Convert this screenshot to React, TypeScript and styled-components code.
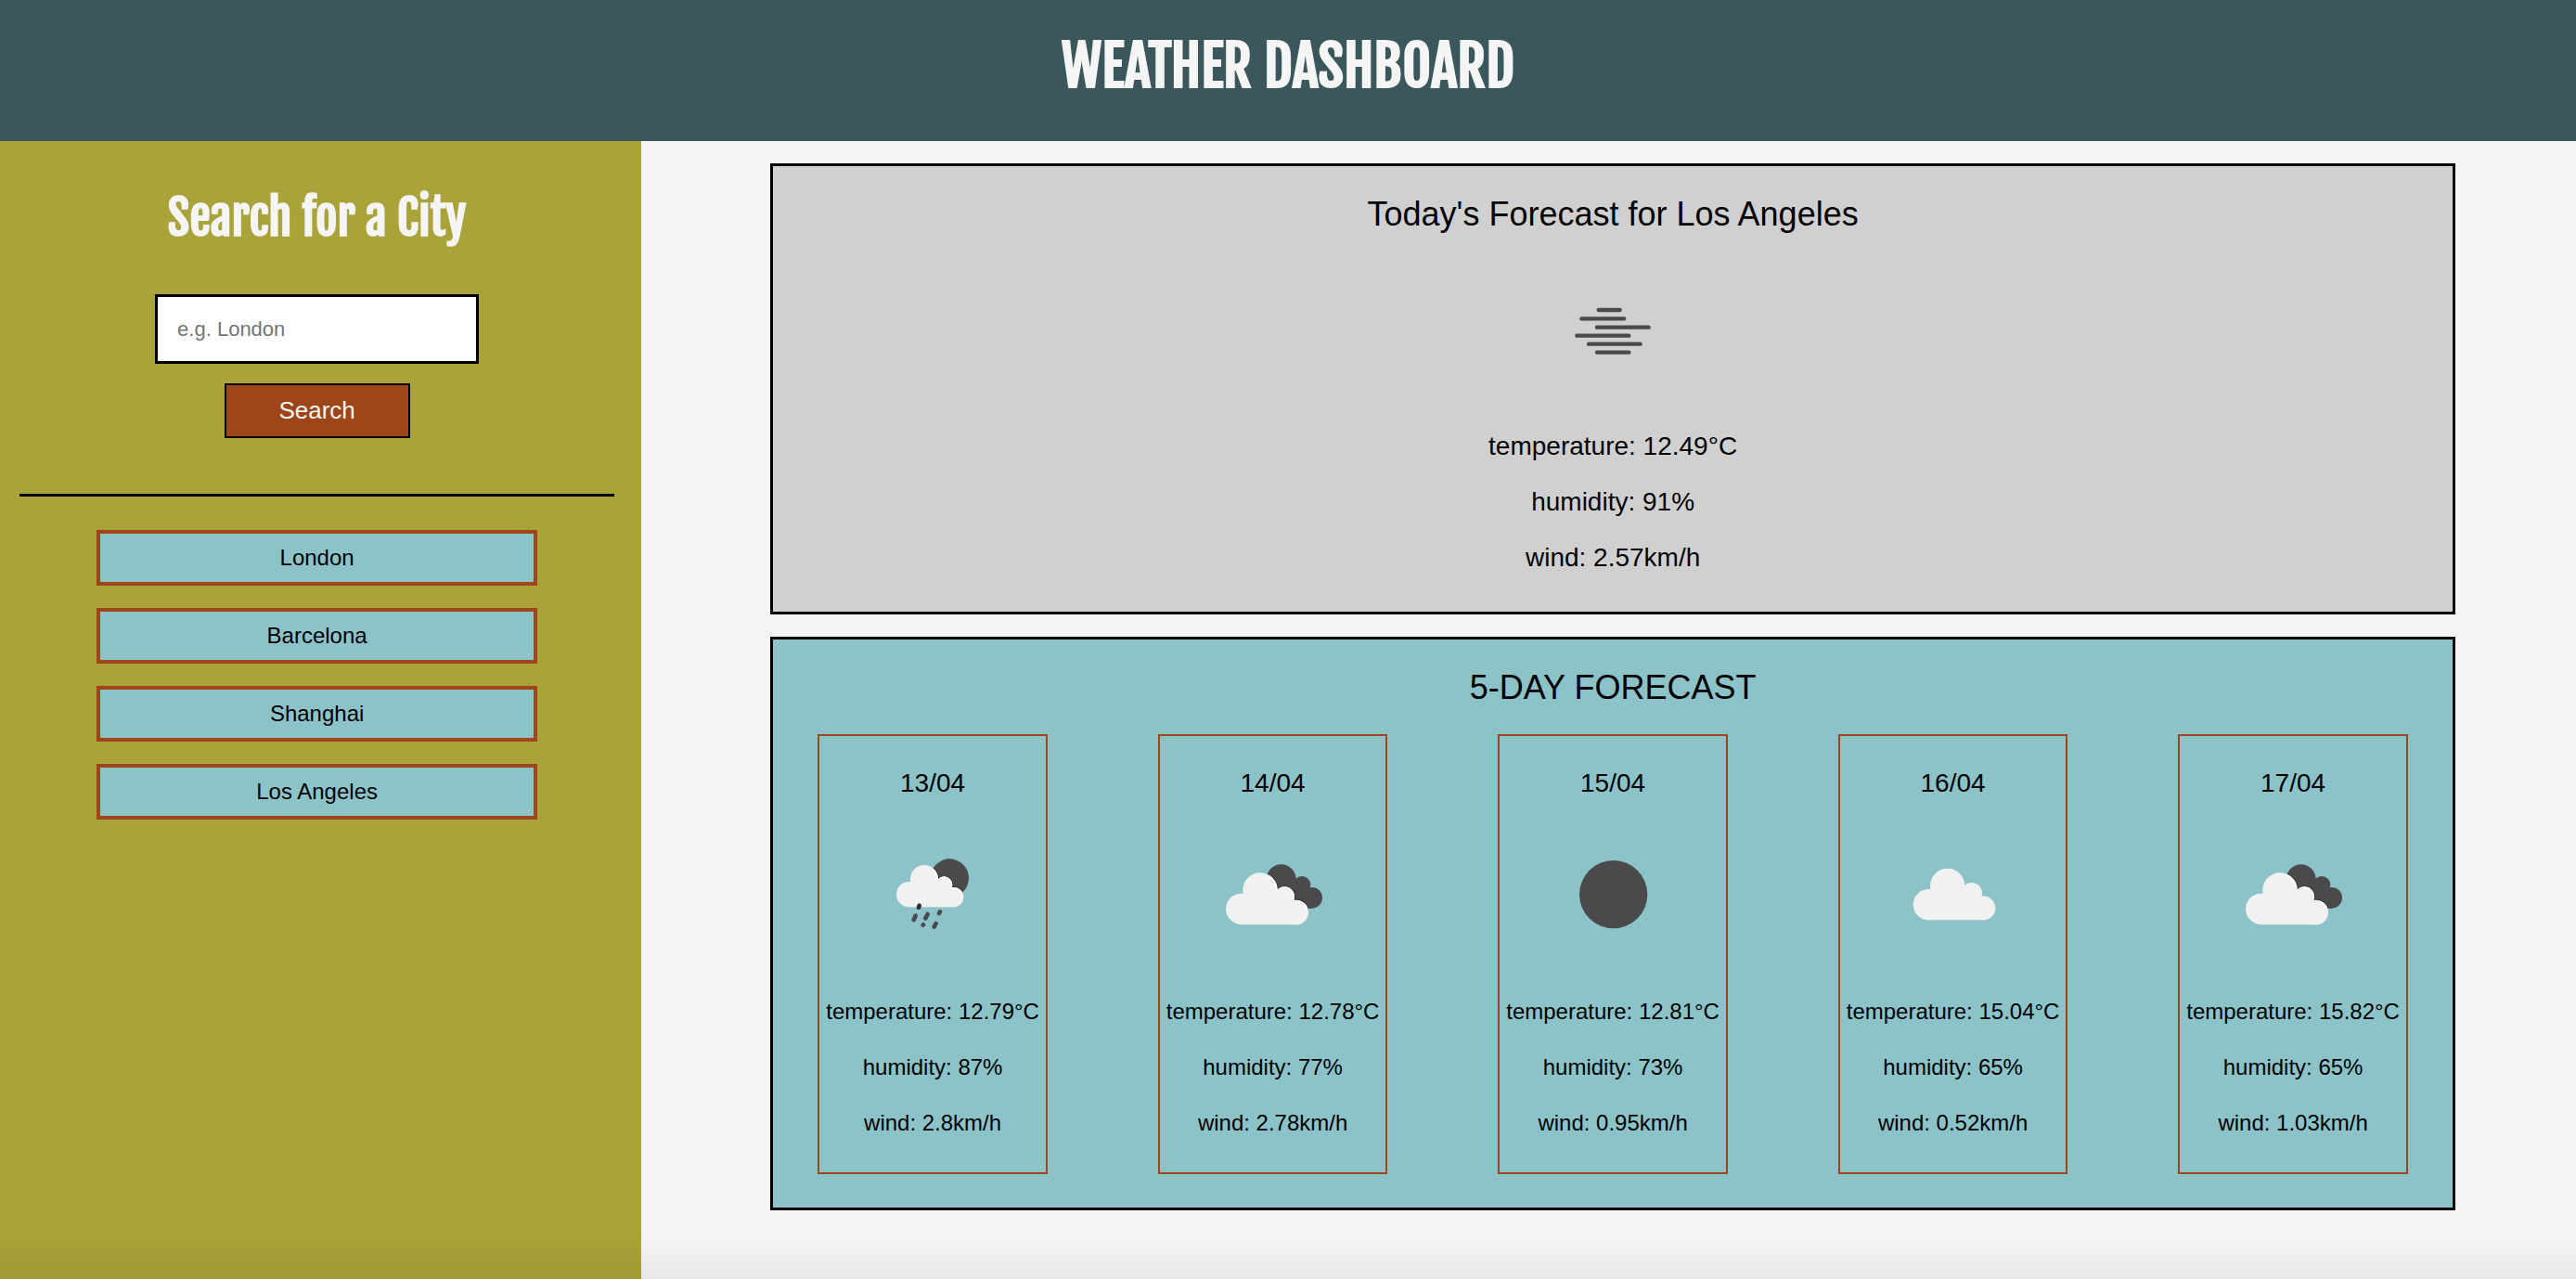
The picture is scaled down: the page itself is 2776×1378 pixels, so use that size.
import React, { useState } from 'react';
import styled, { createGlobalStyle } from 'styled-components';

const color = {
  header: '#3a575c',
  sidebar: '#aaa339',
  page: '#f5f5f5',
  today: '#d0d0d0',
  sky: '#8bc3c8',
  rust: '#9e461a',
  moon: '#4a4a4c',
  cloud: '#f1f1f1',
};

const displayFont = `'Fjalla One', 'Liberation Sans Narrow', 'Roboto Condensed', 'Open Sans Condensed', sans-serif`;

const GlobalStyle = createGlobalStyle`
  *, *::before, *::after { box-sizing: border-box; }
  body {
    margin: 0;
    background: ${color.page};
    color: #000;
    font-family: Arial, 'Liberation Sans', sans-serif;
  }
  h1, h2, h3, p, ul { margin: 0; padding: 0; }
`;

const Page = styled.div`
  display: flex;
  flex-direction: column;
  min-height: 100vh;
`;

const Header = styled.header`
  display: flex;
  justify-content: center;
  padding: 29px 24px 39px;
  background: ${color.header};
`;

const Title = styled.h1`
  color: ${color.page};
  font-family: ${displayFont};
  font-size: 60px;
  line-height: 84px;
  font-weight: 700;
`;

const Columns = styled.div`
  display: flex;
  flex: 1;
`;

const Sidebar = styled.aside`
  display: flex;
  flex-direction: column;
  align-items: center;
  flex: 0 0 24.9%;
  padding: 45px 29px 44px 21px;
  background: ${color.sidebar};
`;

const SidebarTitle = styled.h2`
  color: ${color.page};
  font-family: ${displayFont};
  font-size: 51px;
  line-height: 76px;
  font-weight: 700;
`;

const SearchForm = styled.form`
  display: flex;
  flex-direction: column;
  align-items: center;
  gap: 21px;
  margin-top: 44px;
`;

const SearchInput = styled.input`
  width: 349px;
  padding: 22px 21px;
  border: 3px solid #000;
  border-radius: 0;
  background: #fff;
  font: 22px/25px Arial, 'Liberation Sans', sans-serif;
  &::placeholder { color: #757575; opacity: 1; }
`;

const SearchButton = styled.button`
  width: 200px;
  padding: 12px;
  border: 2px solid #000;
  background: ${color.rust};
  color: ${color.page};
  font: 26px/31px Arial, 'Liberation Sans', sans-serif;
  cursor: pointer;
`;

const Divider = styled.hr`
  width: 100%;
  margin: 60px 0 36px;
  border: 0;
  border-top: 3px solid #000;
`;

const History = styled.ul`
  display: flex;
  flex-direction: column;
  align-items: center;
  gap: 24px;
  width: 100%;
  list-style: none;
`;

const HistoryItem = styled.li`
  width: 74%;
`;

const HistoryButton = styled.button`
  display: block;
  width: 100%;
  padding: 12px;
  border: 4px solid ${color.rust};
  background: ${color.sky};
  color: #000;
  font: 24px/28px Arial, 'Liberation Sans', sans-serif;
  cursor: pointer;
`;

const Main = styled.main`
  display: flex;
  flex-direction: column;
  flex: 1;
  gap: 24px;
  padding: 24px 130px 24px 139px;
`;

const Panel = styled.section<{ $fill: string; $bottom: number }>`
  display: flex;
  flex-direction: column;
  padding: 30px 48px ${(p) => p.$bottom}px;
  border: 3px solid #000;
  background: ${(p) => p.$fill};
  text-align: center;
`;

const PanelTitle = styled.h2`
  font-size: 36px;
  line-height: 44px;
  font-weight: 400;
`;

const IconSvg = styled.svg`
  display: block;
  width: 200px;
  height: 200px;
  margin: 4px auto 8px;
`;

const Readings = styled.div<{ $large?: boolean }>`
  display: flex;
  flex-direction: column;
  gap: ${(p) => (p.$large ? 28 : 32)}px;
  padding-top: ${(p) => (p.$large ? 0 : 4)}px;
  font-size: ${(p) => (p.$large ? 28 : 24)}px;
  line-height: ${(p) => (p.$large ? 32 : 28)}px;
`;

const Days = styled.div`
  display: flex;
  justify-content: space-between;
  margin-top: 28px;
`;

const DayCard = styled.article`
  padding: 35px 7px 39px;
  border: 2px solid ${color.rust};
`;

const DayTitle = styled.h3`
  font-size: 28px;
  line-height: 32px;
  font-weight: 400;
`;

const BottomShade = styled.div`
  position: fixed;
  inset: auto 0 0;
  height: 48px;
  background: linear-gradient(rgba(0, 0, 0, 0), rgba(0, 0, 0, 0.055));
  pointer-events: none;
`;

type IconKind = 'mist' | 'rain' | 'broken' | 'clear' | 'cloud';

const MistLines = () => (
  <path
    d="M128 72H197M73 100H211M123 128H290M58 155H226M96 182H263M123 209H226"
    stroke={color.moon}
    strokeWidth="13"
    strokeLinecap="round"
  />
);

const RainCloud = () => (
  <>
    <circle cx="198" cy="141" r="45" />
    <circle cx="149" cy="191" r="41" />
    <circle cx="262" cy="160" r="27" />
    <circle cx="293" cy="200" r="32" />
    <path d="M149 160L262 150L293 190V232H149Z" />
  </>
);

const FrontCloud = () => (
  <>
    <circle cx="174" cy="177" r="56" />
    <circle cx="113" cy="238" r="50" />
    <circle cx="253" cy="198" r="32" />
    <circle cx="290" cy="249" r="40" />
    <path d="M113 200L250 190L290 230V289H113Z" />
  </>
);

const SmallCloud = () => (
  <>
    <circle cx="205" cy="163" r="56" />
    <circle cx="144" cy="224" r="50" />
    <circle cx="283" cy="187" r="34" />
    <circle cx="321" cy="235" r="39" />
    <path d="M144 185L280 180L321 215V274H144Z" />
  </>
);

const BackCloud = () => (
  <>
    <circle cx="242" cy="142" r="48" />
    <circle cx="309" cy="160" r="28" />
    <circle cx="341" cy="202" r="34" />
    <path d="M200 150L300 140L335 180L341 236H300Z" />
  </>
);

const views: Record<IconKind, string> = {
  mist: '-126 -159 600 600',
  rain: '-75 -108 600 600',
  broken: '-84 -108 600 600',
  clear: '-65 -108 600 600',
  cloud: '-76 -108 600 600',
};

function WeatherIcon({ kind, label, id }: { kind: IconKind; label: string; id: string }) {
  return (
    <IconSvg viewBox={views[kind]} role="img" aria-label={label} fill="none">
      {kind === 'mist' && <MistLines />}
      {kind === 'clear' && <circle cx="237" cy="191" r="110" fill={color.moon} />}
      {kind === 'cloud' && (
        <g fill={color.cloud}>
          <SmallCloud />
        </g>
      )}
      {kind === 'rain' && (
        <>
          <clipPath id={id}>
            <circle cx="280" cy="138" r="62" />
          </clipPath>
          <circle cx="280" cy="138" r="62" fill={color.moon} />
          <g clipPath={`url(#${id})`} stroke="#2e2e30" strokeWidth="5">
            <RainCloud />
          </g>
          <g fill={color.cloud}>
            <RainCloud />
          </g>
          <g clipPath={`url(#${id})`}>
            <g fill="#fff">
              <RainCloud />
            </g>
            <g fill={color.cloud} transform="translate(-4 4)">
              <RainCloud />
            </g>
          </g>
          <g stroke={color.moon} strokeWidth="14" strokeLinecap="round">
            <path d="M182 227L180 233" stroke="#2e2e30" />
            <path d="M170 260L164 273M209 255L202 268M249 247L246 252M195 289L194 290M236 285L230 296" />
          </g>
        </>
      )}
      {kind === 'broken' && (
        <>
          <clipPath id={id}>
            <BackCloud />
          </clipPath>
          <g fill={color.moon}>
            <BackCloud />
          </g>
          <g clipPath={`url(#${id})`} stroke="#2e2e30" strokeWidth="5">
            <FrontCloud />
          </g>
          <g fill={color.cloud}>
            <FrontCloud />
          </g>
          <g clipPath={`url(#${id})`}>
            <g fill="#fff">
              <FrontCloud />
            </g>
            <g fill={color.cloud} transform="translate(-4 4)">
              <FrontCloud />
            </g>
          </g>
        </>
      )}
    </IconSvg>
  );
}

interface Reading {
  temperature: string;
  humidity: string;
  wind: string;
}

interface Day extends Reading {
  date: string;
  icon: IconKind;
  label: string;
}

const cities = ['London', 'Barcelona', 'Shanghai', 'Los Angeles'];

const today: Reading = { temperature: '12.49', humidity: '91', wind: '2.57' };

const days: Day[] = [
  { date: '13/04', icon: 'rain', label: 'rain', temperature: '12.79', humidity: '87', wind: '2.8' },
  { date: '14/04', icon: 'broken', label: 'broken clouds', temperature: '12.78', humidity: '77', wind: '2.78' },
  { date: '15/04', icon: 'clear', label: 'clear sky', temperature: '12.81', humidity: '73', wind: '0.95' },
  { date: '16/04', icon: 'cloud', label: 'scattered clouds', temperature: '15.04', humidity: '65', wind: '0.52' },
  { date: '17/04', icon: 'broken', label: 'broken clouds', temperature: '15.82', humidity: '65', wind: '1.03' },
];

function ReadingList({ reading, large }: { reading: Reading; large?: boolean }) {
  return (
    <Readings $large={large}>
      <p>{`temperature: ${reading.temperature}°C`}</p>
      <p>{`humidity: ${reading.humidity}%`}</p>
      <p>{`wind: ${reading.wind}km/h`}</p>
    </Readings>
  );
}

export default function App() {
  const [query, setQuery] = useState('');

  return (
    <Page>
      <GlobalStyle />
      <Header>
        <Title>WEATHER DASHBOARD</Title>
      </Header>
      <Columns>
        <Sidebar>
          <SidebarTitle id="search-title">Search for a City</SidebarTitle>
          <SearchForm onSubmit={(e) => e.preventDefault()}>
            <SearchInput
              type="text"
              aria-labelledby="search-title"
              placeholder="e.g. London"
              value={query}
              onChange={(e) => setQuery(e.target.value)}
            />
            <SearchButton type="submit">Search</SearchButton>
          </SearchForm>
          <Divider />
          <History>
            {cities.map((city) => (
              <HistoryItem key={city}>
                <HistoryButton type="button">{city}</HistoryButton>
              </HistoryItem>
            ))}
          </History>
        </Sidebar>
        <Main>
          <Panel $fill={color.today} $bottom={42}>
            <PanelTitle>Today's Forecast for Los Angeles</PanelTitle>
            <WeatherIcon kind="mist" label="mist" id="today" />
            <ReadingList reading={today} large />
          </Panel>
          <Panel $fill={color.sky} $bottom={36}>
            <PanelTitle>5-DAY FORECAST</PanelTitle>
            <Days>
              {days.map((day, i) => (
                <DayCard key={day.date}>
                  <DayTitle>{day.date}</DayTitle>
                  <WeatherIcon kind={day.icon} label={day.label} id={`day-${i}`} />
                  <ReadingList reading={day} />
                </DayCard>
              ))}
            </Days>
          </Panel>
        </Main>
      </Columns>
      <BottomShade />
    </Page>
  );
}
